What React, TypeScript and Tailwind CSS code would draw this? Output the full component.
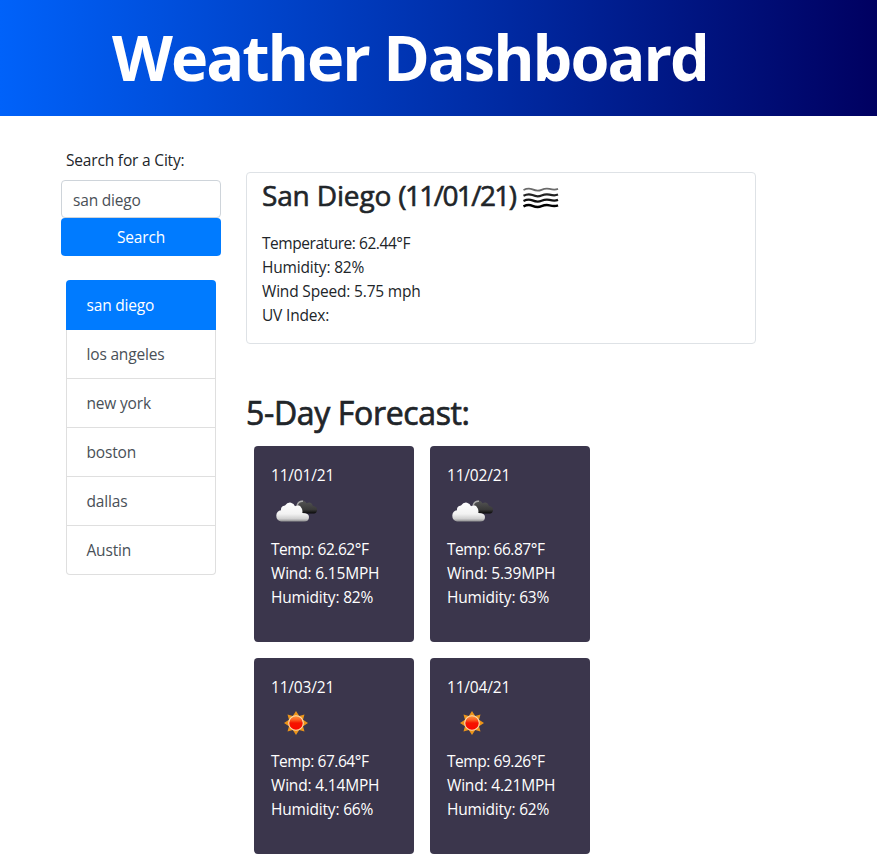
import React from "react";

function MistIcon() {
  const wave = "c3 -1.5 6 -1.9 9 -0.6 c3 1.3 6 1.7 9 0.4 c3 -1.3 5.500 -1.500 8 -0.9 c3 0.8 5.500 1.300 8.500 0";
  return (
    <svg width="36" height="22" viewBox="0 0 36 22" fill="none" className="mt-[14px] ml-[7px] shrink-0">
      <path d={"M0.500 3" + wave} stroke="#6b6b6b" strokeWidth="1.800" />
      <path d={"M0.500 8.700" + wave} stroke="#222" strokeWidth="2.200" />
      <path d={"M0.500 14" + wave} stroke="#111" strokeWidth="2.300" />
      <path d={"M0.500 19.400" + wave} stroke="#000" strokeWidth="2.400" />
    </svg>
  );
}

function CloudIcon() {
  return (
    <svg width="50" height="50" viewBox="0 0 50 50">
      <defs>
        <linearGradient id="front" x1="0" y1="0" x2="0" y2="1">
          <stop offset="0" stopColor="#fff" />
          <stop offset="0.6" stopColor="#f2f2f2" />
          <stop offset="0.85" stopColor="#d0d0d0" />
          <stop offset="1" stopColor="#8d8d8f" />
        </linearGradient>
        <linearGradient id="back" x1="0" y1="0" x2="0" y2="1">
          <stop offset="0" stopColor="#555" />
          <stop offset="0.7" stopColor="#393939" />
          <stop offset="1" stopColor="#080808" />
        </linearGradient>
      </defs>
      <g transform="translate(0 -1)">
        <path d="M28 27.500 Q24.500 23 26 18.500 Q28 14 32 14.500 Q34.500 15 35.500 17.300 Q40 15 42 20 Q46.500 20.500 46 24.500 Q45.500 27.500 43 27.500Z" fill="url(#back)" />
        <path d="M26.200 19 Q28 14.800 32 15.300" fill="none" stroke="#aaa" strokeWidth="1.500" />
        <path d="M10 35.500 Q5.200 34.500 5.300 29.500 Q5.500 25 10 24.300 Q9.500 20 14 19.500 Q16.500 16 20 16.700 Q23 17.300 24 20.300 Q28.500 17.500 30.800 22.500 Q31.800 25 31.300 27 Q38 27 38 31 Q38 35.500 33 35.500Z" fill="url(#front)" />
      </g>
    </svg>
  );
}

function SunIcon() {
  return (
    <svg width="50" height="50" viewBox="0 0 50 50">
      <defs>
        <linearGradient id="sun" x1="0" y1="0" x2="0" y2="1">
          <stop offset="0" stopColor="#ff9a3c" />
          <stop offset="0.3" stopColor="#fa5a20" />
          <stop offset="0.5" stopColor="#f51400" />
          <stop offset="1" stopColor="#fa0800" />
        </linearGradient>
      </defs>
      <g transform="translate(0 -1)">
        <path d="M25 13 L28.200 18 L33.500 16.500 L32 21.800 L37 25 L32 28.200 L33.500 33.500 L28.200 32 L25 37 L21.800 32 L16.500 33.500 L18 28.200 L13 25 L18 21.800 L16.500 16.500 L21.800 18Z" fill="#ec9419" />
        <circle cx="25" cy="25" r="7.300" fill="url(#sun)" stroke="#fbdcae" strokeWidth="1.100" />
      </g>
    </svg>
  );
}

const cities = ["los angeles", "new york", "boston", "dallas", "Austin"];

const forecast = [
  { date: "11/01/21", sunny: false, temp: "62.62", wind: "6.15", humidity: "82" },
  { date: "11/02/21", sunny: false, temp: "66.87", wind: "5.39", humidity: "63" },
  { date: "11/03/21", sunny: true, temp: "67.64", wind: "4.14", humidity: "66" },
  { date: "11/04/21", sunny: true, temp: "69.26", wind: "4.21", humidity: "62" },
];

export default function App() {
  return (
    <div className="h-[860px] w-[877px] overflow-hidden bg-white font-['Open_Sans','Noto_Sans',sans-serif] text-[15.5px] leading-6 tracking-[-0.18px] text-[#212529]">
      <header className="flex h-[116px] items-center bg-[linear-gradient(90deg,#0062fa,#000061)] pb-[3px] pl-[112px]">
        <h1 className="text-[63px] leading-[77px] font-bold tracking-[-2px] whitespace-nowrap text-white">Weather Dashboard</h1>
      </header>
      <div className="flex">
        <aside className="w-[246px] shrink-0 pt-8 pl-[61px]">
          <label className="block pl-[5px]" htmlFor="city">Search for a City:</label>
          <input id="city" defaultValue="san diego" className="mt-2 block h-[38px] w-40 rounded border border-[#ced4da] px-[11px] pt-[2px] text-[#495057] outline-none" />
          <button className="block h-[38px] w-40 rounded bg-[#007bff] text-white">Search</button>
          <ul className="mt-6 ml-[5px] w-[150px]">
            <li className="flex h-[50px] items-center rounded-t bg-[#007bff] pl-[20.5px] text-white">san diego</li>
            {cities.map((city) => (
              <li key={city} className="flex h-[49px] items-center border-x border-b border-[#dfdfdf] pl-[19.5px] text-[#495057] last:rounded-b">{city}</li>
            ))}
          </ul>
        </aside>
        <main className="pt-14">
          <section className="h-[172px] w-[510px] rounded border border-[#dee2e6] pl-[15px]">
            <h2 className="flex h-[46px] items-start text-[28px] whitespace-nowrap">
              <span className="w-[254px] leading-[44px] tracking-[-0.15px] [-webkit-text-stroke:0.6px_#212529]">
                San Diego <span className="tracking-[-1.6px]">(11/01/21)</span>
              </span>
              <MistIcon />
            </h2>
            <div className="pt-3">
              <p className="tracking-[-0.45px]">Temperature: 62.44°F</p>
              <p>Humidity: 82%</p>
              <p>Wind Speed: 5.75 mph</p>
              <p>UV Index:</p>
            </div>
          </section>
          <h2 className="mt-[50px] text-[32px] leading-[38px] tracking-[-0.35px] [-webkit-text-stroke:0.7px_#212529]">5-Day Forecast:</h2>
          <div className="mt-[14px] ml-2 grid w-[336px] grid-cols-2 gap-4">
            {forecast.map((day) => (
              <article key={day.date} className="h-[196px] rounded bg-[#3b364c] pt-[17px] pl-[17px] text-white">
                <p>{day.date}</p>
                <div className="h-[50px]">{day.sunny ? <SunIcon /> : <CloudIcon />}</div>
                <p className="tracking-[-0.45px]">Temp: {day.temp}°F</p>
                <p>Wind: {day.wind}MPH</p>
                <p>Humidity: {day.humidity}%</p>
              </article>
            ))}
          </div>
        </main>
      </div>
    </div>
  );
}
